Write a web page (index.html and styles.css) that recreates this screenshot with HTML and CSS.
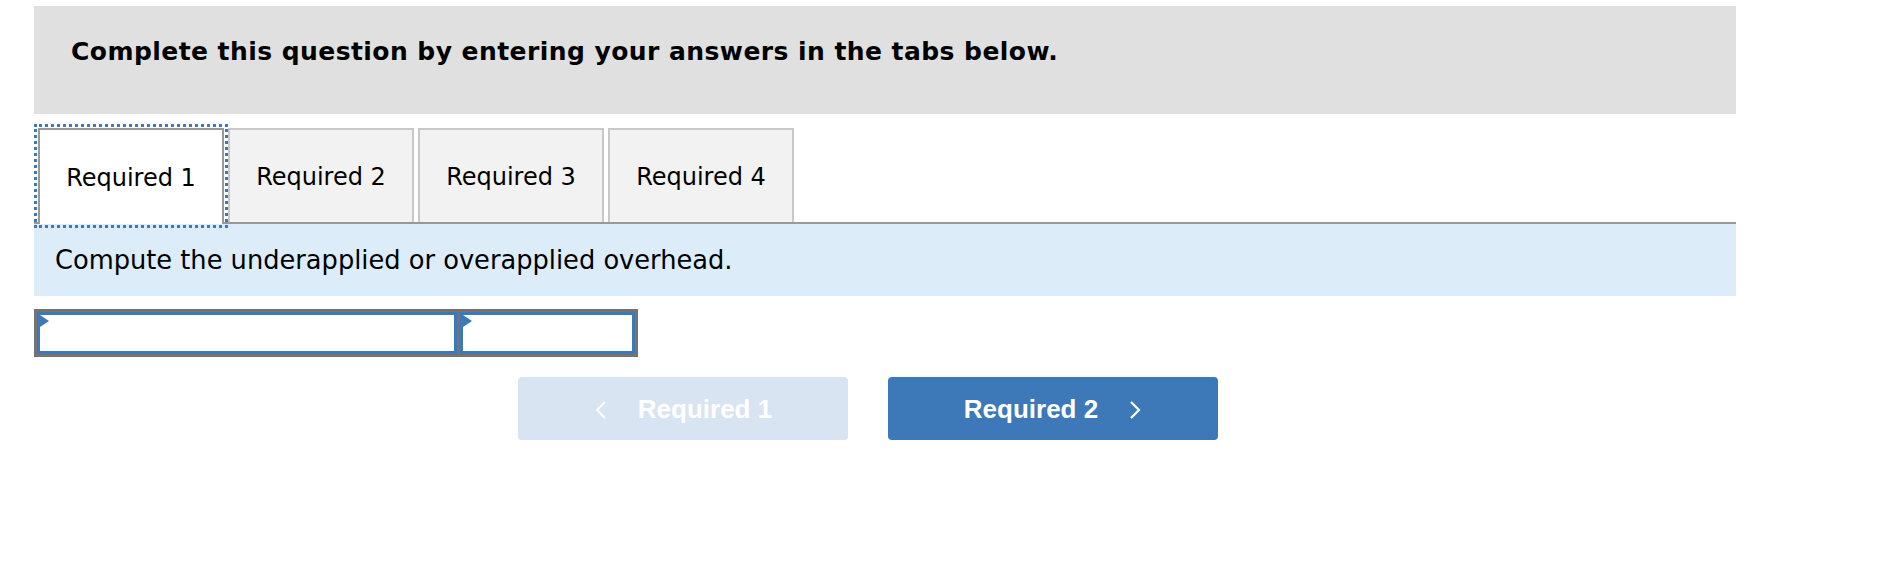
FILE: index.html
```html
<!DOCTYPE html>
<html lang="en">
<head>
<meta charset="utf-8">
<title>Required</title>
<link rel="stylesheet" href="styles.css">
</head>
<body>
<div class="page">
  <div class="instructions">Complete this question by entering your answers in the tabs below.</div>

  <div class="tabs">
    <div class="tab tab-active">Required 1</div>
    <div class="tab">Required 2</div>
    <div class="tab">Required 3</div>
    <div class="tab">Required 4</div>
  </div>

  <div class="prompt">Compute the underapplied or overapplied overhead.</div>

  <div class="answer-row">
    <div class="cell cell-wide"><span class="marker"></span></div>
    <div class="cell cell-narrow"><span class="marker"></span></div>
  </div>

  <div class="nav">
    <div class="nav-btn nav-prev">
      <svg class="chev" width="14" height="20" viewBox="0 0 14 20"><polyline points="11,2 3,10 11,18" fill="none" stroke="#fff" stroke-width="2.2"/></svg>
      <span>Required 1</span>
    </div>
    <div class="nav-btn nav-next">
      <span>Required 2</span>
      <svg class="chev" width="14" height="20" viewBox="0 0 14 20"><polyline points="3,2 11,10 3,18" fill="none" stroke="#fff" stroke-width="2.2"/></svg>
    </div>
  </div>
</div>
</body>
</html>
```

FILE: styles.css
```css
html, body {
  margin: 0;
  padding: 0;
  background: #ffffff;
}

.page {
  margin: 6px 0 0 34px;
  width: 1702px;
  font-family: "DejaVu Sans", Verdana, sans-serif;
  color: #000;
}

.instructions {
  box-sizing: border-box;
  height: 108px;
  background: #e0e0e0;
  padding: 31px 37px 0 37px;
  font-weight: bold;
  font-size: 25px;
  letter-spacing: 0.44px;
  line-height: 29px;
}

.tabs {
  display: flex;
  gap: 4px;
  margin-top: 14px;
  padding-left: 4px;
  border-bottom: 2px solid #999999;
  align-items: flex-end;
}

.tab {
  box-sizing: border-box;
  width: 186px;
  height: 94px;
  background: #f2f2f2;
  border: 2px solid #c8c8c8;
  border-bottom: none;
  display: flex;
  align-items: center;
  justify-content: center;
  font-size: 24px;
  padding-top: 2px;
}

.tab-active {
  position: relative;
  height: 96px;
  margin-bottom: -2px;
  background: #ffffff;
  border-color: #999999;
  outline: 3px dotted #3d78b8;
  outline-offset: 1px;
}

.prompt {
  box-sizing: border-box;
  height: 72px;
  background: #dcecf9;
  padding-left: 21px;
  display: flex;
  align-items: center;
  font-size: 25.7px;
}

.answer-row {
  display: flex;
  gap: 3px;
  width: max-content;
  margin-top: 13px;
  padding: 3px;
  background: #737373;
}

.cell {
  position: relative;
  box-sizing: border-box;
  height: 42px;
  background: #ffffff;
  border: 3px solid #3d78b8;
}

.cell-wide { width: 420px; }
.cell-narrow { width: 175px; }

.marker {
  position: absolute;
  left: 0;
  top: 0;
  width: 0;
  height: 0;
  border-top: 6px solid transparent;
  border-bottom: 6px solid transparent;
  border-left: 9px solid #3d78b8;
}

.nav {
  display: flex;
  gap: 40px;
  margin-top: 20px;
  padding-left: 484px;
}

.nav-btn {
  box-sizing: border-box;
  width: 330px;
  height: 63px;
  border-radius: 4px;
  display: flex;
  align-items: center;
  justify-content: center;
  gap: 30px;
  font-family: "Liberation Sans", Arial, sans-serif;
  font-weight: bold;
  font-size: 26px;
  color: #ffffff;
  padding-top: 2px;
}

.nav-prev { background: #d8e4f2; }
.nav-next { background: #3d78b8; }

.chev { display: block; }
```
